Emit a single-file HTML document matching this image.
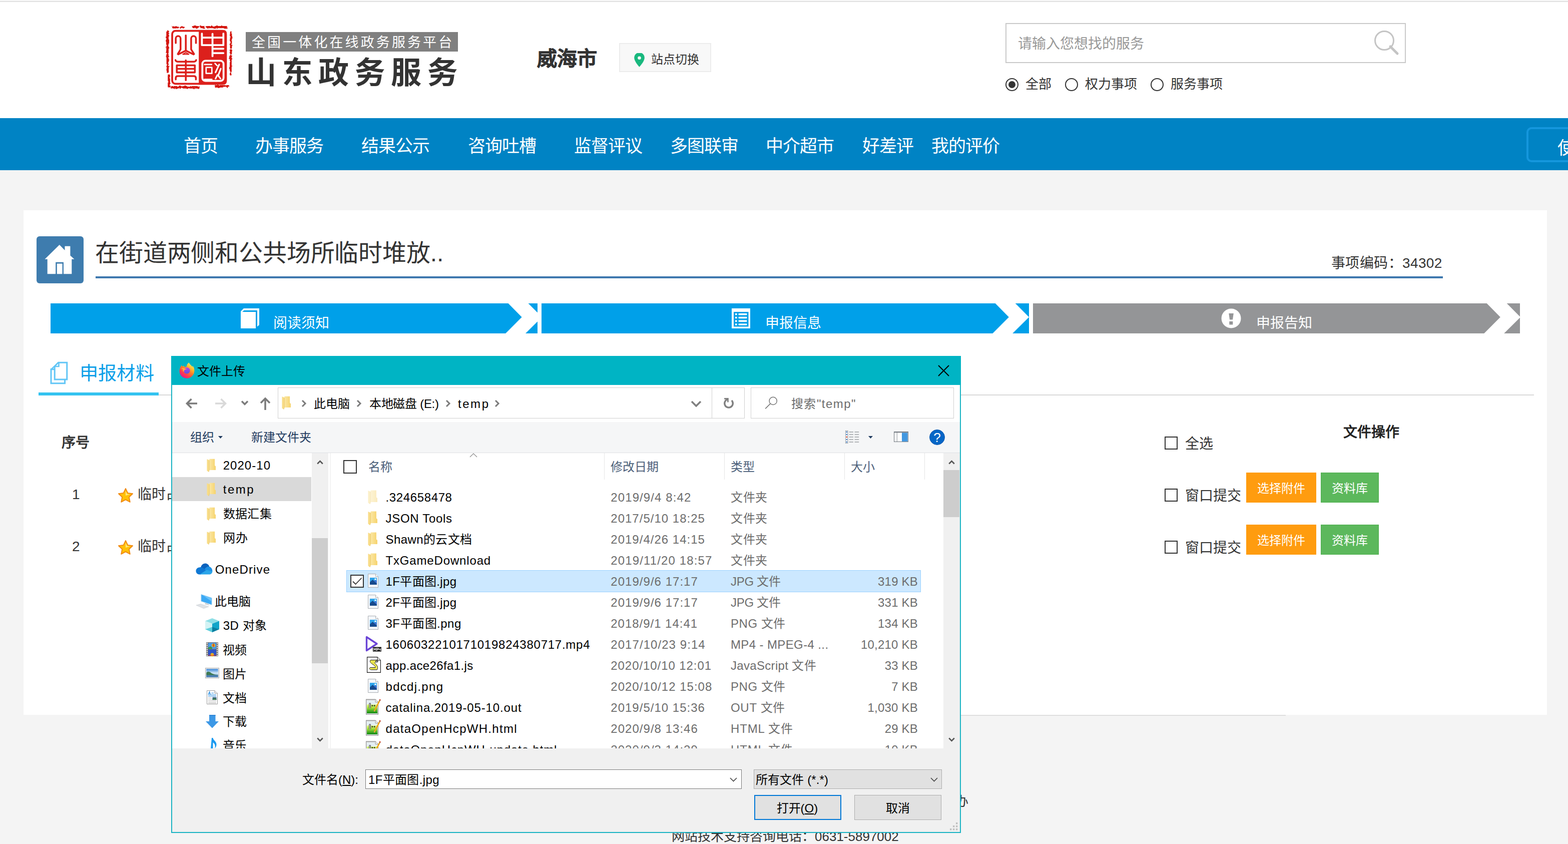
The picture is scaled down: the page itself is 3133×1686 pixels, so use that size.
<!DOCTYPE html>
<html lang="zh-CN"><head><meta charset="utf-8"><title>山东政务服务</title>
<style>
html,body{margin:0;padding:0;}
body{width:3133px;height:1686px;overflow:hidden;background:#f4f4f4;position:relative;
font-family:"Liberation Sans",sans-serif;}
.t{position:absolute;white-space:nowrap;margin:0;padding:0;}
.r{position:absolute;box-sizing:border-box;}
svg{position:absolute;overflow:visible;}
.t i{font-style:normal;display:inline-block;width:calc(1em + var(--ls,0px));letter-spacing:0;text-align:left;vertical-align:baseline;}
</style></head><body>

<div class="r" style="left:0px;top:0px;width:3133px;height:236px;background:#fff;"></div>
<div class="r" style="left:0px;top:0px;width:3133px;height:2px;background:#f9f9f9;"></div>
<div class="r" style="left:0px;top:2px;width:3133px;height:2px;background:#e0e0e0;"></div>
<svg style="left:325px;top:40px" width="150" height="145" viewBox="0 0 1434 1386">
<defs><filter id="rough" x="-5%" y="-5%" width="110%" height="110%"><feTurbulence type="fractalNoise" baseFrequency="0.02" numOctaves="2" seed="7" result="n"/><feDisplacementMap in="SourceGraphic" in2="n" scale="42"/></filter></defs>
<g filter="url(#rough)" fill="none" stroke="#d4120f" stroke-linecap="round">
<path d="M92 215 V700 M95 740 V1000 M120 1060 V1270" stroke-width="44" stroke-dasharray="250 40 120 30 300 50"/>
<path d="M200 140 H440 M590 135 H1220" stroke-width="40" stroke-dasharray="90 50 60 60 400 30 200 40"/>
<path d="M1305 230 V640 M1300 680 V1040" stroke-width="36" stroke-dasharray="300 40 150 60"/>
<path d="M170 1285 H740 M1010 1265 H1250" stroke-width="46" stroke-dasharray="180 40 300 60"/>
</g>
<rect x="182" y="207" width="1026" height="1011" rx="62" fill="#fff" stroke="#dc201c" stroke-width="36"/>
<path d="M690 190 H1163 a62 62 0 0 1 62 62 V1173 a62 62 0 0 1 -62 62 H690 Z" fill="#dc201c"/>
<g fill="none" stroke="#dc201c" stroke-width="34" stroke-linecap="round" stroke-linejoin="round">
<path d="M250 440 V352 a46 46 0 0 1 92 0 V560 L290 650"/>
<path d="M636 440 V352 a46 46 0 0 0 -92 0 V560 L600 650"/>
<path d="M442 295 V590"/>
<path d="M300 655 L442 585 L590 655"/>
<path d="M385 655 L442 622 L500 655 Z" stroke-width="20"/>
<path d="M245 765 q10 30 40 30 H600 q30 0 40 -30"/>
<path d="M442 770 V1150"/>
<path d="M270 865 H615 V1000 H270 Z M270 932 H615"/>
<path d="M250 1135 V1110 q0 -40 40 -40 H595 q40 0 40 40 V1135"/>
</g>
<g fill="none" stroke="#fff" stroke-width="36" stroke-linecap="round" stroke-linejoin="round">
<path d="M750 260 V480 H1160 V260 M750 335 H1160"/>
<path d="M952 265 V690"/>
<path d="M975 548 H1160 M975 632 H1160"/>
<rect x="758" y="778" width="405" height="385" rx="60"/>
<path d="M800 850 H935 M1000 830 L1040 870 M830 905 H940 V1020 H830 Z M800 1135 H940" stroke-width="26"/>
<path d="M1080 850 L1010 1000 M1110 930 L1060 1060 L1105 1120 M1010 1120 L1045 1050" stroke-width="30"/>
</g>
</svg>
<div class="r" style="left:491px;top:64px;width:424px;height:39px;background:#808080;"></div>
<svg style="left:0;top:0" width="940" height="200" viewBox="0 0 940 200" role="img" aria-label="全国一体化在线政务服务平台 山东政务服务"><title>全国一体化在线政务服务平台 山东政务服务</title>
<text x="503" y="93.5" font-size="27" fill="#fff" letter-spacing="4.1" style="font-family:'Liberation Sans','Noto Sans CJK SC',sans-serif;">全国一体化在线政务服务平台</text>
<text x="491" y="167" font-size="61" font-weight="bold" fill="#333" letter-spacing="11.5" style="font-family:'Liberation Sans','Noto Sans CJK SC',sans-serif;">山东政务服务</text></svg>
<div class="t" style="left:1073px;top:89.0px;height:56px;line-height:56px;font-size:40px;color:#333;font-weight:bold;-webkit-text-stroke:0.8px #333;"><i>威</i><i>海</i><i>市</i></div>
<div class="r" style="left:1237px;top:86px;width:184px;height:58px;background:#f8f8f8;border:2px solid #ececec;"></div>
<svg style="left:1266.5px;top:106px;overflow:hidden" width="21" height="28" viewBox="0 0 21 28">
<path d="M10.5 -1 C4.5 -1 0.2 3.6 0.2 9.6 C0.2 16.8 10.5 27.8 10.5 27.8 C10.5 27.8 20.8 16.8 20.8 9.6 C20.8 3.6 16.5 -1 10.5 -1 Z" fill="#19b87e"/>
<circle cx="10.5" cy="9.8" r="3.3" fill="#f8f8f8"/></svg>
<div class="t" style="left:1301px;top:101.5px;height:33px;line-height:33px;font-size:24px;color:#333;font-weight:normal;"><i>站</i><i>点</i><i>切</i><i>换</i></div>
<div class="r" style="left:2009px;top:46px;width:800px;height:80px;background:#fff;border:2px solid #c9c9c9;"></div>
<div class="t" style="left:2034px;top:67.5px;height:39px;line-height:39px;font-size:28px;color:#999;font-weight:normal;"><i>请</i><i>输</i><i>入</i><i>您</i><i>想</i><i>找</i><i>的</i><i>服</i><i>务</i></div>
<svg style="left:2745px;top:60px" width="50" height="50" viewBox="0 0 50 50">
<circle cx="21" cy="21" r="18.5" fill="none" stroke="#c4c4c4" stroke-width="3"/>
<path d="M33 33 L47 47" stroke="#c4c4c4" stroke-width="5" stroke-linecap="round"/></svg>
<svg style="left:2008px;top:155px" width="28" height="28" viewBox="0 0 28 28"><circle cx="14" cy="14" r="12" fill="#fff" stroke="#333" stroke-width="2"/><circle cx="14" cy="14" r="7" fill="#333"/></svg>
<div class="t" style="left:2049px;top:150.0px;height:36px;line-height:36px;font-size:26px;color:#333;font-weight:normal;"><i>全</i><i>部</i></div>
<svg style="left:2127px;top:155px" width="28" height="28" viewBox="0 0 28 28"><circle cx="14" cy="14" r="12" fill="#fff" stroke="#333" stroke-width="2"/></svg>
<div class="t" style="left:2168px;top:150.0px;height:36px;line-height:36px;font-size:26px;color:#333;font-weight:normal;"><i>权</i><i>力</i><i>事</i><i>项</i></div>
<svg style="left:2298px;top:155px" width="28" height="28" viewBox="0 0 28 28"><circle cx="14" cy="14" r="12" fill="#fff" stroke="#333" stroke-width="2"/></svg>
<div class="t" style="left:2339px;top:150.0px;height:36px;line-height:36px;font-size:26px;color:#333;font-weight:normal;"><i>服</i><i>务</i><i>事</i><i>项</i></div>
<div class="r" style="left:0px;top:236px;width:3133px;height:104px;background:#0083c4;"></div>
<div class="t" style="left:367px;top:267.0px;height:49px;line-height:49px;font-size:35px;color:#fff;font-weight:normal;letter-spacing:-1px;--ls:-1.00px;"><i>首</i><i>页</i></div>
<div class="t" style="left:510px;top:267.0px;height:49px;line-height:49px;font-size:35px;color:#fff;font-weight:normal;letter-spacing:-1px;--ls:-1.00px;"><i>办</i><i>事</i><i>服</i><i>务</i></div>
<div class="t" style="left:722px;top:267.0px;height:49px;line-height:49px;font-size:35px;color:#fff;font-weight:normal;letter-spacing:-1px;--ls:-1.00px;"><i>结</i><i>果</i><i>公</i><i>示</i></div>
<div class="t" style="left:935px;top:267.0px;height:49px;line-height:49px;font-size:35px;color:#fff;font-weight:normal;letter-spacing:-1px;--ls:-1.00px;"><i>咨</i><i>询</i><i>吐</i><i>槽</i></div>
<div class="t" style="left:1147px;top:267.0px;height:49px;line-height:49px;font-size:35px;color:#fff;font-weight:normal;letter-spacing:-1px;--ls:-1.00px;"><i>监</i><i>督</i><i>评</i><i>议</i></div>
<div class="t" style="left:1339px;top:267.0px;height:49px;line-height:49px;font-size:35px;color:#fff;font-weight:normal;letter-spacing:-1px;--ls:-1.00px;"><i>多</i><i>图</i><i>联</i><i>审</i></div>
<div class="t" style="left:1530px;top:267.0px;height:49px;line-height:49px;font-size:35px;color:#fff;font-weight:normal;letter-spacing:-1px;--ls:-1.00px;"><i>中</i><i>介</i><i>超</i><i>市</i></div>
<div class="t" style="left:1723px;top:267.0px;height:49px;line-height:49px;font-size:35px;color:#fff;font-weight:normal;letter-spacing:-1px;--ls:-1.00px;"><i>好</i><i>差</i><i>评</i></div>
<div class="t" style="left:1861px;top:267.0px;height:49px;line-height:49px;font-size:35px;color:#fff;font-weight:normal;letter-spacing:-1px;--ls:-1.00px;"><i>我</i><i>的</i><i>评</i><i>价</i></div>
<div class="r" style="left:3050px;top:254px;width:120px;height:70px;background:transparent;border:4px solid #1597dd;border-radius:10px;"></div>
<div class="t" style="left:3111.5px;top:270.5px;height:49px;line-height:49px;font-size:35px;color:#fff;font-weight:normal;"><i>使</i><i>用</i><i>帮</i><i>助</i></div>
<div class="r" style="left:47px;top:420px;width:3044px;height:1008px;background:#fff;"></div>
<div class="r" style="left:73px;top:472px;width:94px;height:94px;background:#3e7cae;border-radius:6px;"></div>
<svg style="left:73px;top:472px" width="94" height="94" viewBox="73 472 94 94">
<path d="M118.8 489 L129.5 500 V491.7 H140.4 V510.5 L148.5 517.8 H143.3 V547.3 H127 V523.8 H111.2 V547.3 H94.7 V517.8 H89.5 Z" fill="#fff"/>
<rect x="113.8" y="526.6" width="10.8" height="20.7" fill="#fff"/></svg>
<div class="t" style="left:190px;top:471.5px;height:67px;line-height:67px;font-size:48px;color:#333;font-weight:normal;letter-spacing:-0.15px;--ls:-0.15px;"><i>在</i><i>街</i><i>道</i><i>两</i><i>侧</i><i>和</i><i>公</i><i>共</i><i>场</i><i>所</i><i>临</i><i>时</i><i>堆</i><i>放</i>..</div>
<div class="r" style="left:191px;top:552px;width:2692px;height:4px;background:#3e78ae;"></div>
<div class="t" style="left:2660px;top:505.5px;height:39px;line-height:39px;font-size:28px;color:#333;font-weight:normal;letter-spacing:0.4px;--ls:0.40px;"><i>事</i><i>项</i><i>编</i><i>码</i><i>：</i>34302</div>
<svg style="left:101px;top:606px;overflow:hidden" width="973" height="60" viewBox="0 0 973 60"><polygon points="0,0 914.5,0 941.5999999999999,27.4 909.1999999999999,60 0,60" fill="#00a0e9"/><polygon points="954.5,0 1100,0 1100,60 949.0,60 981.8,27.4" fill="#00a0e9"/></svg><svg style="left:481px;top:616px" width="37" height="40" viewBox="0 0 37 40">
<path d="M0 6 L6 0 H37 V33 L33 36.5 V4 H6.5 L3 7 H30 V40 H0 Z" fill="#fff"/></svg><div class="t" style="left:546px;top:625.5px;height:39px;line-height:39px;font-size:28px;color:#fff;font-weight:normal;"><i>阅</i><i>读</i><i>须</i><i>知</i></div>
<svg style="left:1082px;top:606px;overflow:hidden" width="974" height="60" viewBox="0 0 974 60"><polygon points="0,0 906.7,0 933.8,27.4 901.4,60 0,60" fill="#00a0e9"/><polygon points="946.7,0 1100,0 1100,60 941.2,60 974,27.4" fill="#00a0e9"/></svg><svg style="left:1462px;top:616px" width="37" height="40" viewBox="0 0 37 40">
<path d="M0 0 H37 V40 H0 Z M4 7 V36.5 H33.5 V7 Z" fill="#fff" fill-rule="evenodd"/>
<g fill="#fff"><rect x="7" y="10" width="3.6" height="3.4"/><rect x="13.5" y="10" width="17" height="3.4" rx="1.2"/>
<rect x="7" y="16.8" width="3.6" height="3.4"/><rect x="13.5" y="16.8" width="17" height="3.4" rx="1.2"/>
<rect x="7" y="23.6" width="3.6" height="3.4"/><rect x="13.5" y="23.6" width="17" height="3.4" rx="1.2"/>
<rect x="7" y="30.4" width="3.6" height="3.4"/><rect x="13.5" y="30.4" width="17" height="3.4" rx="1.2"/></g></svg><div class="t" style="left:1529px;top:625.5px;height:39px;line-height:39px;font-size:28px;color:#fff;font-weight:normal;"><i>申</i><i>报</i><i>信</i><i>息</i></div>
<svg style="left:2064px;top:606px;overflow:hidden" width="973" height="60" viewBox="0 0 973 60"><polygon points="0,0 906.7,0 933.8,27.4 901.4,60 0,60" fill="#949597"/><polygon points="946.7,0 1100,0 1100,60 941.2,60 974,27.4" fill="#949597"/></svg><svg style="left:2440px;top:616px" width="40" height="40" viewBox="0 0 40 40">
<circle cx="20" cy="20" r="19.5" fill="#fff"/>
<path d="M15.3 10 H24.8 L23 22.5 H17 Z M16.3 26 H23.3 V32.5 H16.3 Z" fill="#949597"/></svg><div class="t" style="left:2510px;top:625.5px;height:39px;line-height:39px;font-size:28px;color:#fff;font-weight:normal;"><i>申</i><i>报</i><i>告</i><i>知</i></div>
<svg style="left:98px;top:720px" width="40" height="50" viewBox="98 720 40 50">
<g fill="none" stroke="#62c6f6" stroke-width="3">
<path d="M116.5 724.2 H133.8 V758 H109.2 V731.5 Z"/><path d="M109.2 732 H117.5 V724.2" stroke-width="2.6"/>
<path d="M108 737.8 H102 V765.8 H129.6 V759"/><path d="M101.5 738.5 L109 731.5" stroke-width="2.4"/></g></svg>
<div class="t" style="left:159px;top:720.0px;height:52px;line-height:52px;font-size:37.2px;color:#0c9fe8;font-weight:normal;"><i>申</i><i>报</i><i>材</i><i>料</i></div>
<div class="r" style="left:77px;top:788px;width:2988px;height:2px;background:#d9d9d9;"></div>
<div class="r" style="left:77px;top:784px;width:240px;height:6px;background:#33c3f0;"></div>
<div class="t" style="left:123px;top:864.5px;height:39px;line-height:39px;font-size:28px;color:#333;font-weight:bold;"><i>序</i><i>号</i></div>
<div class="t" style="left:144px;top:967.5px;height:39px;line-height:39px;font-size:28px;color:#333;font-weight:normal;">1</div>
<svg style="left:236px;top:975px" width="30" height="29" viewBox="0 0 32 31">
<path d="M16 1 L20.6 10.6 L31 12 L23.4 19.2 L25.4 29.8 L16 24.7 L6.6 29.8 L8.6 19.2 L1 12 L11.4 10.6 Z" fill="#ffc107" stroke="#f08a12" stroke-width="2" stroke-linejoin="round"/>
<path d="M16 5.5 L19 12.3 L25.5 13.3 L16 16 Z" fill="#ffe680"/></svg>
<div class="t" style="left:275px;top:967.5px;height:39px;line-height:39px;font-size:28px;color:#333;font-weight:normal;"><i>临</i><i>时</i><i>占</i><i>用</i><i>街</i><i>道</i><i>两</i><i>侧</i><i>和</i><i>公</i><i>共</i><i>场</i><i>所</i><i>审</i><i>批</i><i>申</i><i>请</i><i>表</i></div>
<div class="t" style="left:144px;top:1071.5px;height:39px;line-height:39px;font-size:28px;color:#333;font-weight:normal;">2</div>
<svg style="left:236px;top:1079px" width="30" height="29" viewBox="0 0 32 31">
<path d="M16 1 L20.6 10.6 L31 12 L23.4 19.2 L25.4 29.8 L16 24.7 L6.6 29.8 L8.6 19.2 L1 12 L11.4 10.6 Z" fill="#ffc107" stroke="#f08a12" stroke-width="2" stroke-linejoin="round"/>
<path d="M16 5.5 L19 12.3 L25.5 13.3 L16 16 Z" fill="#ffe680"/></svg>
<div class="t" style="left:275px;top:1071.5px;height:39px;line-height:39px;font-size:28px;color:#333;font-weight:normal;"><i>临</i><i>时</i><i>占</i><i>用</i><i>街</i><i>道</i><i>两</i><i>侧</i><i>和</i><i>公</i><i>共</i><i>场</i><i>所</i><i>审</i><i>批</i><i>申</i><i>请</i><i>表</i></div>
<div class="t" style="left:2684px;top:844.0px;height:39px;line-height:39px;font-size:28px;color:#222;font-weight:bold;"><i>文</i><i>件</i><i>操</i><i>作</i></div>
<div class="r" style="left:2327px;top:872px;width:26px;height:26px;background:#fff;border:2px solid #333;"></div>
<div class="t" style="left:2368px;top:866.5px;height:39px;line-height:39px;font-size:28px;color:#333;font-weight:normal;"><i>全</i><i>选</i></div>
<div class="r" style="left:2327px;top:976px;width:26px;height:26px;background:#fff;border:2px solid #333;"></div>
<div class="t" style="left:2368px;top:970.5px;height:39px;line-height:39px;font-size:28px;color:#333;font-weight:normal;"><i>窗</i><i>口</i><i>提</i><i>交</i></div>
<div class="r" style="left:2490px;top:944px;width:140px;height:60px;background:#ff9c0f;"></div>
<div class="t" style="left:2512px;top:958.5px;height:33px;line-height:33px;font-size:24px;color:#fff;font-weight:normal;"><i>选</i><i>择</i><i>附</i><i>件</i></div>
<div class="r" style="left:2639px;top:944px;width:116px;height:60px;background:#5cb85c;border:1px solid #4cae4c;"></div>
<div class="t" style="left:2661px;top:958.5px;height:33px;line-height:33px;font-size:24px;color:#fff;font-weight:normal;"><i>资</i><i>料</i><i>库</i></div>
<div class="r" style="left:2327px;top:1080px;width:26px;height:26px;background:#fff;border:2px solid #333;"></div>
<div class="t" style="left:2368px;top:1074.5px;height:39px;line-height:39px;font-size:28px;color:#333;font-weight:normal;"><i>窗</i><i>口</i><i>提</i><i>交</i></div>
<div class="r" style="left:2490px;top:1048px;width:140px;height:60px;background:#ff9c0f;"></div>
<div class="t" style="left:2512px;top:1062.5px;height:33px;line-height:33px;font-size:24px;color:#fff;font-weight:normal;"><i>选</i><i>择</i><i>附</i><i>件</i></div>
<div class="r" style="left:2639px;top:1048px;width:116px;height:60px;background:#5cb85c;border:1px solid #4cae4c;"></div>
<div class="t" style="left:2661px;top:1062.5px;height:33px;line-height:33px;font-size:24px;color:#fff;font-weight:normal;"><i>资</i><i>料</i><i>库</i></div>
<div class="r" style="left:1920px;top:1428px;width:649px;height:2px;background:#dedede;"></div>
<div class="t" style="left:1342px;top:1652.5px;height:36px;line-height:36px;font-size:26px;color:#333;font-weight:normal;letter-spacing:0px;"><i>网</i><i>站</i><i>技</i><i>术</i><i>支</i><i>持</i><i>咨</i><i>询</i><i>电</i><i>话</i><i>：</i>0631-5897002</div>
<div class="t" style="left:1909px;top:1583.0px;height:36px;line-height:36px;font-size:26px;color:#333;font-weight:normal;"><i>办</i></div>
<div class="r" style="left:342px;top:711px;width:1578px;height:953px;background:#fff;border:2px solid #1bb3c3;"></div>
<div class="r" style="left:342px;top:711px;width:1578px;height:58px;background:#00b4c4;"></div>
<svg width="0" height="0" style="left:0;top:0"><defs>
<linearGradient id="gf" x1="0" y1="0" x2="1" y2="0"><stop offset="0" stop-color="#fbe7a4"/><stop offset="1" stop-color="#f6d36d"/></linearGradient>
<linearGradient id="gg" x1="0" y1="0" x2="0" y2="1"><stop offset="0" stop-color="#e4f98a"/><stop offset="0.35" stop-color="#a9e13e"/><stop offset="1" stop-color="#08860f"/></linearGradient>
<linearGradient id="gi" x1="0" y1="0" x2="0" y2="1"><stop offset="0" stop-color="#2ea3e8"/><stop offset="1" stop-color="#2aa0e6"/></linearGradient>
<symbol id="fold" viewBox="0 0 20 28">
<path d="M5.5 0.5 H17 V14.5 L19 16 V24 H5.5 Z" fill="url(#gf)"/>
<path d="M0.5 1 L5.5 3.2 V24 L4.2 28 L0.5 25.5 Z" fill="#f8dc87"/>
<path d="M5.5 3.2 V24 L4.2 28" fill="none" stroke="#e0b84a" stroke-width="0.6"/></symbol>
<symbol id="img" viewBox="0 0 21 28">
<path d="M0.5 0.5 H15.5 L20.5 5.5 V27.5 H0.5 Z" fill="#f4f7fa" stroke="#a9adb2" stroke-width="1"/>
<path d="M15.5 0.5 V5.5 H20.5" fill="#fff" stroke="#a9adb2" stroke-width="1"/>
<rect x="4" y="8" width="14" height="14" fill="#2fa4ea"/>
<path d="M4 22 V17 L9.5 12 L18 19.5 V22 Z" fill="#174a8c"/>
<path d="M12 14.5 L15 12.5 L18 15 V19.5 Z" fill="#3d6fd0"/>
<rect x="13.5" y="9.5" width="3" height="3" fill="#fff"/></symbol>
<symbol id="npp" viewBox="0 0 30 32">
<path d="M0.7 1.2 H19 L24.5 6.5 V30.9 H0.7 Z" fill="#f4f8fa" stroke="#8c8c8c" stroke-width="1.2"/>
<path d="M19 1.2 V6.5 H24.5" fill="#fff" stroke="#8c8c8c" stroke-width="1"/>
<path d="M2.5 2.6 H17.5" stroke="#888" stroke-width="1" stroke-dasharray="0.8 0.9"/>
<path d="M2.2 4.8 H18 M2.2 6.6 H19 M2.2 8.4 H23 M2.2 10.2 H23" stroke="#cfe3ea" stroke-width="0.8"/>
<rect x="2" y="11.2" width="21.2" height="17.8" fill="url(#gg)"/>
<path d="M6.8 18.6 V9.9 a1.35 1.35 0 0 1 2.7 0 V18.6" fill="#d2d2d2" stroke="#111" stroke-width="0.8"/>
<path d="M11.3 13.7 H14.7 M13 12 V15.4 M15.6 13.7 H19 M17.3 12 V15.4" stroke="#111" stroke-width="0.95" fill="none"/>
<path d="M27.6 0.6 L29.9 1.9 L18.3 24.4 L16.2 25.8 L16.2 23.2 Z" fill="#f2a516"/>
<path d="M27.6 0.6 L29.9 1.9 L29 3.7 L26.7 2.4 Z" fill="#c7383c"/>
<path d="M26.7 2.4 L29 3.7 L28.4 4.9 L26.1 3.6 Z" fill="#8a8f98"/>
<path d="M16.2 25.8 L16.2 23.2 L18.3 24.4 Z" fill="#e8c9a0"/><path d="M16.2 25.8 L16.2 24.7 L17.1 25.2 Z" fill="#333"/></symbol>
</defs></svg>
<svg style="left:357.5px;top:723.5px" width="31" height="32" viewBox="0 0 31 32">
<defs><linearGradient id="ffb" x1="0.85" y1="0.08" x2="0.25" y2="0.95"><stop offset="0" stop-color="#fff36b"/><stop offset="0.25" stop-color="#ffc02f"/><stop offset="0.5" stop-color="#ff7f27"/><stop offset="0.75" stop-color="#ff3f4a"/><stop offset="1" stop-color="#e8168b"/></linearGradient>
<linearGradient id="ffgl" x1="0.5" y1="0" x2="0.5" y2="1"><stop offset="0" stop-color="#b93df5"/><stop offset="1" stop-color="#5b57d8"/></linearGradient></defs>
<path d="M19.5 0.3 C20.5 3.5 24 5.5 26.5 9 C27 8 26.8 7 26.5 6.2 C29.5 9 30.8 13.5 30.3 18 C29.5 26 23 31.7 15.3 31.7 C7 31.7 0.6 25.3 0.6 17.3 C0.6 12.5 2.5 8.5 5.3 5.6 C5.6 7 6.3 8 7.2 8.6 C7.6 7.6 8.3 6.8 9.3 6.2 C9.6 7.5 10.3 8.6 11.5 9.2 C12.5 8.6 13.8 8.3 15 8.4 C14.6 5.5 16.5 2.5 19.5 0.3 Z" fill="url(#ffb)"/>
<circle cx="15.3" cy="16.3" r="6.3" fill="url(#ffgl)"/>
<path d="M4 12.8 C6 11 9 10.8 11 12 C12.5 12.9 14 13 15.6 12.6 C14.5 14 12.5 14.6 11 14.6 C9.8 15.6 9.2 17 9.6 18.8 C7 17.5 6.8 14.8 8 13.4 C6.6 12.7 5.3 12.5 4 12.8 Z" fill="#ffb43a"/></svg>
<div class="t" style="left:394px;top:724.5px;height:33px;line-height:33px;font-size:24px;color:#000;font-weight:normal;"><i>文</i><i>件</i><i>上</i><i>传</i></div>
<svg style="left:1874px;top:729px" width="23" height="23" viewBox="0 0 23 23"><path d="M1 1 L22 22 M22 1 L1 22" stroke="#000" stroke-width="2" fill="none"/></svg>
<svg style="left:370px;top:793px" width="26" height="26" viewBox="0 0 26 26"><path d="M24 13 H4.5 M12.5 4 L3.5 13 L12.5 22" fill="none" stroke="#7b7b7b" stroke-width="3.6"/></svg>
<svg style="left:428px;top:793px" width="26" height="26" viewBox="0 0 26 26"><path d="M2 13 H21.5 M13.5 4 L22.5 13 L13.5 22" fill="none" stroke="#d9d9d9" stroke-width="3.6"/></svg>
<svg style="left:481px;top:799px" width="16" height="12" viewBox="0 0 16 12"><path d="M2 2.5 L8 8.5 L14 2.5" fill="none" stroke="#7b7b7b" stroke-width="3.4"/></svg>
<svg style="left:519px;top:792px" width="22" height="28" viewBox="0 0 22 28"><path d="M11 27 V4.5 M2 13 L11 4 L20 13" fill="none" stroke="#7b7b7b" stroke-width="3.6"/></svg>
<div class="r" style="left:555px;top:774px;width:933px;height:62px;background:#fff;border:1px solid #d0d0d0;"></div>
<div class="r" style="left:1422px;top:775px;width:1px;height:60px;background:#d0d0d0;"></div>
<svg style="left:563px;top:791px" width="19" height="27"><use href="#fold" width="19" height="27"/></svg>
<svg style="left:602px;top:798px" width="11" height="16" viewBox="0 0 11 16"><path d="M2 2 L8 8 L2 14" fill="none" stroke="#7b7b7b" stroke-width="3"/></svg>
<div class="t" style="left:627px;top:789.5px;height:33px;line-height:33px;font-size:24px;color:#000;font-weight:normal;"><i>此</i><i>电</i><i>脑</i></div>
<svg style="left:712px;top:798px" width="11" height="16" viewBox="0 0 11 16"><path d="M2 2 L8 8 L2 14" fill="none" stroke="#7b7b7b" stroke-width="3"/></svg>
<div class="t" style="left:738px;top:789.5px;height:33px;line-height:33px;font-size:24px;color:#000;font-weight:normal;letter-spacing:-0.29px;--ls:-0.29px;"><i>本</i><i>地</i><i>磁</i><i>盘</i> (E:)</div>
<svg style="left:890px;top:798px" width="11" height="16" viewBox="0 0 11 16"><path d="M2 2 L8 8 L2 14" fill="none" stroke="#7b7b7b" stroke-width="3"/></svg>
<div class="t" style="left:915px;top:789.5px;height:33px;line-height:33px;font-size:24px;color:#000;font-weight:normal;letter-spacing:2.55px;--ls:2.55px;">temp</div>
<svg style="left:988px;top:798px" width="11" height="16" viewBox="0 0 11 16"><path d="M2 2 L8 8 L2 14" fill="none" stroke="#7b7b7b" stroke-width="3"/></svg>
<svg style="left:1380px;top:800px" width="22" height="14" viewBox="0 0 22 14"><path d="M2 2 L11 11 L20 2" fill="none" stroke="#808080" stroke-width="3.6"/></svg>
<svg style="left:1440px;top:790px" width="32" height="32" viewBox="0 0 32 32"><path d="M21.9 9.9 A8.3 8.3 0 1 1 14.6 7.6" fill="none" stroke="#808080" stroke-width="3.4"/><path d="M7.1 6.4 H14.45 V13.6" fill="none" stroke="#808080" stroke-width="2.7"/></svg>
<div class="r" style="left:1500px;top:774px;width:406px;height:62px;background:#fff;border:1px solid #d0d0d0;"></div>
<svg style="left:1528px;top:792px" width="26" height="26" viewBox="0 0 26 26"><circle cx="16.7" cy="8.9" r="7.6" fill="none" stroke="#777" stroke-width="1.5"/><path d="M11.2 14.4 L1.2 24.4" stroke="#777" stroke-width="1.6"/></svg>
<div class="t" style="left:1581px;top:789.5px;height:33px;line-height:33px;font-size:24px;color:#6d6d6d;font-weight:normal;letter-spacing:1.44px;--ls:1.44px;"><i>搜</i><i>索</i>"temp"</div>
<div class="r" style="left:344px;top:843px;width:1574px;height:62px;background:#f5f6f7;border-bottom:1px solid #dfe1e4;"></div>
<div class="t" style="left:380px;top:856.5px;height:33px;line-height:33px;font-size:24px;color:#1f3b5f;font-weight:normal;"><i>组</i><i>织</i></div>
<svg style="left:436px;top:871px" width="9" height="5" viewBox="0 0 9 5"><path d="M0 0 H9 L4.5 5 Z" fill="#1f3b5f"/></svg>
<div class="t" style="left:502px;top:856.5px;height:33px;line-height:33px;font-size:24px;color:#1f3b5f;font-weight:normal;"><i>新</i><i>建</i><i>文</i><i>件</i><i>夹</i></div>
<svg style="left:1689px;top:860px" width="28" height="26" viewBox="0 0 28 26"><rect x="0.5" y="0.5" width="4.5" height="25" fill="#fff" stroke="#8a8f96" stroke-width="0.8"/><rect x="1.6" y="1.8" width="2.4" height="2.4" fill="#3a78c2"/><rect x="7.6" y="2.5" width="8.4" height="1" fill="#70757b"/><rect x="18.6" y="2.5" width="8.6" height="1" fill="#70757b"/><rect x="1.6" y="6.8" width="2.4" height="2.4" fill="#3a78c2"/><rect x="7.6" y="7.5" width="8.4" height="1" fill="#70757b"/><rect x="18.6" y="7.5" width="8.6" height="1" fill="#70757b"/><rect x="1.6" y="11.8" width="2.4" height="2.4" fill="#d2452f"/><rect x="7.6" y="12.5" width="8.4" height="1" fill="#70757b"/><rect x="18.6" y="12.5" width="8.6" height="1" fill="#70757b"/><rect x="1.6" y="16.8" width="2.4" height="2.4" fill="#3a78c2"/><rect x="7.6" y="17.5" width="8.4" height="1" fill="#70757b"/><rect x="18.6" y="17.5" width="8.6" height="1" fill="#70757b"/><rect x="1.6" y="21.8" width="2.4" height="2.4" fill="#3a78c2"/><rect x="7.6" y="22.5" width="8.4" height="1" fill="#70757b"/><rect x="18.6" y="22.5" width="8.6" height="1" fill="#70757b"/></svg>
<svg style="left:1735px;top:871px" width="9" height="5" viewBox="0 0 9 5"><path d="M0 0 H9 L4.5 5 Z" fill="#1f3b5f"/></svg>
<svg style="left:1786px;top:862px" width="29" height="21" viewBox="0 0 29 21"><rect x="0.6" y="0.6" width="27.8" height="19.8" fill="#fff" stroke="#7f858c" stroke-width="1.2"/><rect x="16" y="2.3" width="11.6" height="17.6" fill="#4398e0"/><path d="M6.3 1 V20" stroke="#8a9097" stroke-width="1"/><path d="M0.6 1.4 H28.4" stroke="#7a7f86" stroke-width="1.8"/></svg>
<svg style="left:1857px;top:858px" width="31" height="31" viewBox="0 0 31 31"><circle cx="15.5" cy="15.5" r="15" fill="#0566c6" stroke="#0a57b0" stroke-width="1"/></svg>
<div class="t" style="left:1865.3px;top:856.0px;height:36px;line-height:36px;font-size:26px;color:#fff;font-weight:normal;">?</div>
<div class="r" style="left:344px;top:953px;width:278px;height:48px;background:#d9d9d9;"></div>
<svg style="left:413px;top:916px" width="19" height="27"><use href="#fold" width="19" height="27"/></svg>
<div class="t" style="left:445.7px;top:912.5px;height:33px;line-height:33px;font-size:24px;color:#000;font-weight:normal;letter-spacing:1.04px;--ls:1.04px;">2020-10</div>
<svg style="left:413px;top:964px" width="19" height="27"><use href="#fold" width="19" height="27"/></svg>
<div class="t" style="left:445.7px;top:960.5px;height:33px;line-height:33px;font-size:24px;color:#000;font-weight:normal;letter-spacing:2.55px;--ls:2.55px;">temp</div>
<svg style="left:413px;top:1013px" width="19" height="27"><use href="#fold" width="19" height="27"/></svg>
<div class="t" style="left:445.7px;top:1009.5px;height:33px;line-height:33px;font-size:24px;color:#000;font-weight:normal;letter-spacing:0.33px;--ls:0.33px;"><i>数</i><i>据</i><i>汇</i><i>集</i></div>
<svg style="left:413px;top:1061px" width="19" height="27"><use href="#fold" width="19" height="27"/></svg>
<div class="t" style="left:445.7px;top:1057.5px;height:33px;line-height:33px;font-size:24px;color:#000;font-weight:normal;letter-spacing:1.00px;--ls:1.00px;"><i>网</i><i>办</i></div>
<svg style="left:391px;top:1125px" width="34" height="23" viewBox="0 0 34 23">
<path d="M10 9 C11 4 14.5 0.5 19 0.5 C23 0.5 26 3 27.2 6.5 L18 14 L9 10.5 Z" fill="#0b62bd"/>
<path d="M7 8.5 C9 7.5 11.5 7.8 13.5 9 L22 14 L10 22.5 H7 C3.5 22.5 0.5 19.5 0.5 15.5 C0.5 12 3 9 7 8.5 Z" fill="#0f78d4"/>
<path d="M18 11.5 C21 7 26 5.5 29.5 8 C32.5 10 33.8 13.5 33.3 17 L22 18 Z" fill="#1c8fe3"/>
<path d="M33.3 16.5 C33.3 20 30.5 22.5 27.5 22.5 H8 L22 13.5 Z" fill="#2ba5e9"/></svg>
<div class="t" style="left:429.8px;top:1120.5px;height:33px;line-height:33px;font-size:24px;color:#000;font-weight:normal;letter-spacing:1.12px;--ls:1.12px;">OneDrive</div>
<svg style="left:392px;top:1187px" width="32" height="29" viewBox="0 0 32 29">
<path d="M10 0.5 L31 7.5 V21 L10 14 Z" fill="#3ba9f4" stroke="#8fc9f0" stroke-width="1"/>
<path d="M14 2.5 L30 8 V14 Z" fill="#6cc4fb"/>
<path d="M18 17.5 L24 19.5 L27 22.5 L17 20 Z" fill="#c9cdd2"/>
<path d="M0 22 L9 19.5 L25 25 L15 28.5 Z" fill="#dfe2e6" stroke="#c5c9ce" stroke-width="0.6"/></svg>
<div class="t" style="left:429px;top:1184.5px;height:33px;line-height:33px;font-size:24px;color:#000;font-weight:normal;"><i>此</i><i>电</i><i>脑</i></div>
<svg style="left:410px;top:1235px" width="28" height="28" viewBox="0 0 28 28">
<path d="M14 0 L28 5.5 L14 11 L0 5.5 Z" fill="#8fdfe6"/>
<path d="M0 5.5 L14 11 V28 L0 22 Z" fill="#d3f3f4"/>
<path d="M14 11 L28 5.5 V22 L14 28 Z" fill="#12a5c9"/>
<path d="M0 22 L14 17.5 L14 28 Z" fill="#5fcfdc"/>
<path d="M14 17.5 L28 22 L14 28 Z" fill="#0b7ea0"/></svg>
<div class="t" style="left:445.7px;top:1232.5px;height:33px;line-height:33px;font-size:24px;color:#000;font-weight:normal;letter-spacing:0.49px;--ls:0.49px;">3D <i>对</i><i>象</i></div>
<svg style="left:412px;top:1283px" width="24" height="28" viewBox="0 0 24 28"><rect width="24" height="28" fill="#6e6e6e"/><rect x="4" y="1" width="16" height="12.5" fill="#4b9be8"/><rect x="4" y="14.5" width="16" height="12.5" fill="#2f55c9"/><circle cx="14.5" cy="6" r="3.6" fill="#e8b21d"/><path d="M12.6 6 h3.8 M14.5 2.6 v7" stroke="#c32a2a" stroke-width="1.2"/><path d="M4 11 l4-3 4 2.5 v3 h-8z" fill="#3a9a4a"/><circle cx="12" cy="25" r="3.4" fill="#e8b21d"/><path d="M4 26 h16" stroke="#e34" stroke-width="1"/><rect x="0.8" y="1" width="2.2" height="2.2" fill="#f0f0f0"/><rect x="21" y="1" width="2.2" height="2.2" fill="#f0f0f0"/><rect x="0.8" y="5" width="2.2" height="2.2" fill="#f0f0f0"/><rect x="21" y="5" width="2.2" height="2.2" fill="#f0f0f0"/><rect x="0.8" y="9" width="2.2" height="2.2" fill="#f0f0f0"/><rect x="21" y="9" width="2.2" height="2.2" fill="#f0f0f0"/><rect x="0.8" y="13" width="2.2" height="2.2" fill="#f0f0f0"/><rect x="21" y="13" width="2.2" height="2.2" fill="#f0f0f0"/><rect x="0.8" y="17" width="2.2" height="2.2" fill="#f0f0f0"/><rect x="21" y="17" width="2.2" height="2.2" fill="#f0f0f0"/><rect x="0.8" y="21" width="2.2" height="2.2" fill="#f0f0f0"/><rect x="21" y="21" width="2.2" height="2.2" fill="#f0f0f0"/><rect x="0.8" y="25" width="2.2" height="2.2" fill="#f0f0f0"/><rect x="21" y="25" width="2.2" height="2.2" fill="#f0f0f0"/></svg>
<div class="t" style="left:445px;top:1281.5px;height:33px;line-height:33px;font-size:24px;color:#000;font-weight:normal;"><i>视</i><i>频</i></div>
<svg style="left:410px;top:1334px" width="28" height="21" viewBox="0 0 28 21">
<defs><linearGradient id="sky" x1="0" y1="0" x2="0" y2="1"><stop offset="0" stop-color="#3c86d6"/><stop offset="0.5" stop-color="#cfe6f7"/><stop offset="1" stop-color="#5a8dbb"/></linearGradient></defs>
<rect x="0.5" y="0.5" width="27" height="20" fill="#f7f7f7" stroke="#a9a9a9" stroke-width="1"/>
<rect x="2.2" y="2.2" width="23.6" height="16.6" fill="url(#sky)"/>
<path d="M2.2 14 V9.5 C6 6.5 9 8 12 10.5 C16 13 20 14 25.8 14.3 V15 H2.2 Z" fill="#3f7a52"/>
<rect x="2.2" y="14.6" width="23.6" height="4.2" fill="#4d7fb2"/></svg>
<div class="t" style="left:445px;top:1329.5px;height:33px;line-height:33px;font-size:24px;color:#000;font-weight:normal;"><i>图</i><i>片</i></div>
<svg style="left:413px;top:1379px" width="22" height="28" viewBox="0 0 22 28">
<path d="M0.5 0.5 H16 L21.5 6 V27.5 H0.5 Z" fill="#fff" stroke="#9c9c9c" stroke-width="1"/>
<path d="M16 0.5 V6 H21.5" fill="#eee" stroke="#9c9c9c" stroke-width="1"/>
<path d="M3.2 8.2 L5.6 2.6 L7.4 8.2 M4 6.3 H6.8" stroke="#2a8ee0" stroke-width="1.2" fill="none"/>
<path d="M9.5 5.5 H14 M3 8.8 H19 M3 11.5 H19" stroke="#2a8ee0" stroke-width="1"/>
<path d="M3 14.5 H10 M3 17.5 H10 M3 20.5 H19 M3 23.3 H19 M3 25.6 H19" stroke="#b5b5b5" stroke-width="0.9"/>
<rect x="11.5" y="13.5" width="8" height="5.6" fill="#46709a"/><path d="M11.5 17.5 L15 14.8 L19.5 17.2 V19.1 H11.5Z" fill="#3f7a52"/></svg>
<div class="t" style="left:445px;top:1377.5px;height:33px;line-height:33px;font-size:24px;color:#000;font-weight:normal;"><i>文</i><i>档</i></div>
<svg style="left:411px;top:1428px" width="26" height="27" viewBox="0 0 26 27"><path d="M7 0 H19.5 V13 H26 L13 26.5 L0 13 H7 Z" fill="#3c98e6"/><path d="M7 0 H19.5 V2 H7Z" fill="#2f86d6"/></svg>
<div class="t" style="left:445px;top:1424.5px;height:33px;line-height:33px;font-size:24px;color:#000;font-weight:normal;"><i>下</i><i>载</i></div>
<div class="r" style="left:344px;top:1470px;width:279px;height:25px;overflow:hidden;"><svg style="left:76px;top:4px" width="14" height="30" viewBox="0 0 14 30"><path d="M3 0 H5.5 C6 5 13 7 12.5 14 C12.3 17 11 19 9 21 C10.5 17 10 12 5.5 9 V24 C5.5 27 3 28.5 0.5 28 Z" fill="#1a9af0"/></svg><div class="t" style="left:101px;top:2.5px;height:33px;line-height:33px;font-size:24px;color:#000;font-weight:normal;"><i>音</i><i>乐</i></div></div>
<div class="r" style="left:623px;top:905px;width:33px;height:590px;background:#f0f0f0;"></div>
<div class="r" style="left:623px;top:1075px;width:32px;height:250px;background:#cdcdcd;"></div>
<svg style="left:633px;top:918px" width="13" height="10" viewBox="0 0 13 10"><path d="M1.2 8.5 L6.5 3 L11.8 8.5" fill="none" stroke="#555" stroke-width="2.6"/></svg>
<svg style="left:633px;top:1473px" width="13" height="10" viewBox="0 0 13 10"><path d="M1.2 1.5 L6.5 7 L11.8 1.5" fill="none" stroke="#555" stroke-width="2.6"/></svg>
<div class="r" style="left:659px;top:905px;width:2px;height:590px;background:#f3f3f3;"></div>
<div class="r" style="left:686px;top:919px;width:27px;height:27px;background:#fff;border:2px solid #333;"></div>
<div class="t" style="left:736px;top:915.5px;height:33px;line-height:33px;font-size:24px;color:#4c607a;font-weight:normal;"><i>名</i><i>称</i></div>
<svg style="left:938px;top:905px" width="16" height="9" viewBox="0 0 16 9"><path d="M1 8 L8 1 L15 8" fill="none" stroke="#8a8a8a" stroke-width="1.2"/></svg>
<div class="r" style="left:1207px;top:905px;width:1px;height:53px;background:#e5e5e5;"></div>
<div class="r" style="left:1447px;top:905px;width:1px;height:53px;background:#e5e5e5;"></div>
<div class="r" style="left:1687px;top:905px;width:1px;height:53px;background:#e5e5e5;"></div>
<div class="r" style="left:1847px;top:905px;width:1px;height:53px;background:#e5e5e5;"></div>
<div class="t" style="left:1220px;top:915.5px;height:33px;line-height:33px;font-size:24px;color:#4c607a;font-weight:normal;"><i>修</i><i>改</i><i>日</i><i>期</i></div>
<div class="t" style="left:1460px;top:915.5px;height:33px;line-height:33px;font-size:24px;color:#4c607a;font-weight:normal;"><i>类</i><i>型</i></div>
<div class="t" style="left:1700px;top:915.5px;height:33px;line-height:33px;font-size:24px;color:#4c607a;font-weight:normal;"><i>大</i><i>小</i></div>
<div class="r" style="left:692px;top:1139px;width:1148px;height:44px;background:#cce8ff;border:1px solid #99d1ff;"></div>
<div class="r" style="left:700px;top:1148px;width:27px;height:26px;background:#fff;border:2px solid #333;"></div>
<svg style="left:700px;top:1148px" width="27" height="26" viewBox="0 0 27 26"><path d="M5 13.5 L10.5 19 L22.5 6.5" fill="none" stroke="#333" stroke-width="1.8"/></svg>
<div class="r" style="left:661px;top:905px;width:1224px;height:590px;overflow:hidden;"><svg style="left:74px;top:74px; opacity:0.45;" width="20" height="28"><use href="#fold" width="20" height="28"/></svg><div class="t" style="left:109.5px;top:72.1px;height:33px;line-height:33px;font-size:24px;color:#000;font-weight:normal;letter-spacing:0.63px;--ls:0.63px;">.324658478</div><div class="t" style="left:559.3px;top:72.1px;height:33px;line-height:33px;font-size:24px;color:#6d6d6d;font-weight:normal;letter-spacing:1.10px;--ls:1.10px;">2019/9/4 8:42</div><div class="t" style="left:799px;top:72.1px;height:33px;line-height:33px;font-size:24px;color:#6d6d6d;font-weight:normal;letter-spacing:0.70px;--ls:0.70px;"><i>文</i><i>件</i><i>夹</i></div><svg style="left:74px;top:116px;" width="20" height="28"><use href="#fold" width="20" height="28"/></svg><div class="t" style="left:109.5px;top:114.1px;height:33px;line-height:33px;font-size:24px;color:#000;font-weight:normal;letter-spacing:0.69px;--ls:0.69px;">JSON Tools</div><div class="t" style="left:559.3px;top:114.1px;height:33px;line-height:33px;font-size:24px;color:#6d6d6d;font-weight:normal;letter-spacing:1.01px;--ls:1.01px;">2017/5/10 18:25</div><div class="t" style="left:799px;top:114.1px;height:33px;line-height:33px;font-size:24px;color:#6d6d6d;font-weight:normal;letter-spacing:0.70px;--ls:0.70px;"><i>文</i><i>件</i><i>夹</i></div><svg style="left:74px;top:158px;" width="20" height="28"><use href="#fold" width="20" height="28"/></svg><div class="t" style="left:109.5px;top:156.1px;height:33px;line-height:33px;font-size:24px;color:#000;font-weight:normal;letter-spacing:0.43px;--ls:0.43px;">Shawn<i>的</i><i>云</i><i>文</i><i>档</i></div><div class="t" style="left:559.3px;top:156.1px;height:33px;line-height:33px;font-size:24px;color:#6d6d6d;font-weight:normal;letter-spacing:1.01px;--ls:1.01px;">2019/4/26 14:15</div><div class="t" style="left:799px;top:156.1px;height:33px;line-height:33px;font-size:24px;color:#6d6d6d;font-weight:normal;letter-spacing:0.70px;--ls:0.70px;"><i>文</i><i>件</i><i>夹</i></div><svg style="left:74px;top:200px;" width="20" height="28"><use href="#fold" width="20" height="28"/></svg><div class="t" style="left:109.5px;top:198.1px;height:33px;line-height:33px;font-size:24px;color:#000;font-weight:normal;letter-spacing:0.84px;--ls:0.84px;">TxGameDownload</div><div class="t" style="left:559.3px;top:198.1px;height:33px;line-height:33px;font-size:24px;color:#6d6d6d;font-weight:normal;letter-spacing:1.13px;--ls:1.13px;">2019/11/20 18:57</div><div class="t" style="left:799px;top:198.1px;height:33px;line-height:33px;font-size:24px;color:#6d6d6d;font-weight:normal;letter-spacing:0.70px;--ls:0.70px;"><i>文</i><i>件</i><i>夹</i></div><svg style="left:74px;top:241px" width="21" height="28"><use href="#img" width="21" height="28"/></svg><div class="t" style="left:109.5px;top:240.1px;height:33px;line-height:33px;font-size:24px;color:#000;font-weight:normal;letter-spacing:0.37px;--ls:0.37px;">1F<i>平</i><i>面</i><i>图</i>.jpg</div><div class="t" style="left:559.3px;top:240.1px;height:33px;line-height:33px;font-size:24px;color:#6d6d6d;font-weight:normal;letter-spacing:1.03px;--ls:1.03px;">2019/9/6 17:17</div><div class="t" style="left:799px;top:240.1px;height:33px;line-height:33px;font-size:24px;color:#6d6d6d;font-weight:normal;letter-spacing:-0.31px;--ls:-0.31px;">JPG <i>文</i><i>件</i></div><div class="t" style="left:1093.1000000000001px;top:240.1px;height:33px;line-height:33px;font-size:24px;color:#6d6d6d;font-weight:normal;letter-spacing:0.17px;--ls:0.17px;">319 KB</div><svg style="left:74px;top:283px" width="21" height="28"><use href="#img" width="21" height="28"/></svg><div class="t" style="left:109.5px;top:282.1px;height:33px;line-height:33px;font-size:24px;color:#000;font-weight:normal;letter-spacing:0.37px;--ls:0.37px;">2F<i>平</i><i>面</i><i>图</i>.jpg</div><div class="t" style="left:559.3px;top:282.1px;height:33px;line-height:33px;font-size:24px;color:#6d6d6d;font-weight:normal;letter-spacing:1.03px;--ls:1.03px;">2019/9/6 17:17</div><div class="t" style="left:799px;top:282.1px;height:33px;line-height:33px;font-size:24px;color:#6d6d6d;font-weight:normal;letter-spacing:-0.31px;--ls:-0.31px;">JPG <i>文</i><i>件</i></div><div class="t" style="left:1093.1000000000001px;top:282.1px;height:33px;line-height:33px;font-size:24px;color:#6d6d6d;font-weight:normal;letter-spacing:0.17px;--ls:0.17px;">331 KB</div><svg style="left:74px;top:325px" width="21" height="28"><use href="#img" width="21" height="28"/></svg><div class="t" style="left:109.5px;top:324.1px;height:33px;line-height:33px;font-size:24px;color:#000;font-weight:normal;letter-spacing:0.50px;--ls:0.50px;">3F<i>平</i><i>面</i><i>图</i>.png</div><div class="t" style="left:559.3px;top:324.1px;height:33px;line-height:33px;font-size:24px;color:#6d6d6d;font-weight:normal;letter-spacing:0.97px;--ls:0.97px;">2018/9/1 14:41</div><div class="t" style="left:799px;top:324.1px;height:33px;line-height:33px;font-size:24px;color:#6d6d6d;font-weight:normal;letter-spacing:0.56px;--ls:0.56px;">PNG <i>文</i><i>件</i></div><div class="t" style="left:1093.1000000000001px;top:324.1px;height:33px;line-height:33px;font-size:24px;color:#6d6d6d;font-weight:normal;letter-spacing:0.17px;--ls:0.17px;">134 KB</div><svg style="left:68px;top:364px" width="34" height="34" viewBox="0 0 34 34"><path d="M3.5 3.5 L24 17 L3.5 30.5 Z" fill="#fff" stroke="#6a44d6" stroke-width="3.4" stroke-linejoin="round"/><rect x="16" y="23.5" width="17" height="9" fill="#111"/><path d="M18 31 V26 L20 28.5 L22 26 V31 M24 31 V26 H26.6 V28.6 H24 M28.5 26 V28.8 H31.5 M31.5 26 V31" fill="none" stroke="#fff" stroke-width="1.1"/></svg><div class="t" style="left:109.5px;top:366.1px;height:33px;line-height:33px;font-size:24px;color:#000;font-weight:normal;letter-spacing:0.75px;--ls:0.75px;">1606032210171019824380717.mp4</div><div class="t" style="left:559.3px;top:366.1px;height:33px;line-height:33px;font-size:24px;color:#6d6d6d;font-weight:normal;letter-spacing:1.06px;--ls:1.06px;">2017/10/23 9:14</div><div class="t" style="left:799px;top:366.1px;height:33px;line-height:33px;font-size:24px;color:#6d6d6d;font-weight:normal;letter-spacing:0.38px;--ls:0.38px;">MP4 - MPEG-4 ...</div><div class="t" style="left:1058.9px;top:366.1px;height:33px;line-height:33px;font-size:24px;color:#6d6d6d;font-weight:normal;letter-spacing:0.21px;--ls:0.21px;">10,210 KB</div><svg style="left:72px;top:407px" width="28" height="32" viewBox="0 0 28 32"><path d="M0.6 0.6 H21 L27.4 7 V31.4 H0.6 Z" fill="#fff" stroke="#111" stroke-width="1.1"/><path d="M21 0.6 V7 H27.4" fill="#e8e8e8" stroke="#111" stroke-width="1"/><path d="M7.5 6.5 H19 C21.5 6.5 22.5 8.5 21.5 10.5 H17.5 C15.5 10.5 15.5 12.5 17.5 14.5 C21.5 18 22.5 21.5 20.5 26 H8.5 C5.5 26 4.5 23 6.5 21.5 H17 C17.5 19.5 15.5 17.5 12.5 15.5 C8.5 13 4.5 10.5 7.5 6.5 Z" fill="#f5f06a" stroke="#111" stroke-width="1"/><path d="M17.8 10.5 C16.8 8.6 17.8 7.2 19.8 7.2 C22 7.6 22.4 9.6 21.2 10.5 Z" fill="#a8a8a8" stroke="#111" stroke-width="0.9"/><path d="M8.6 9 H16 M8.8 11.5 H14.5 M11.5 14 H15.5 M14.5 17 H18.5 M16 19.5 H19.3 M8.5 23.8 H18.5" stroke="#c9c40a" stroke-width="0.8"/></svg><div class="t" style="left:109.5px;top:408.1px;height:33px;line-height:33px;font-size:24px;color:#000;font-weight:normal;letter-spacing:0.37px;--ls:0.37px;">app.ace26fa1.js</div><div class="t" style="left:559.3px;top:408.1px;height:33px;line-height:33px;font-size:24px;color:#6d6d6d;font-weight:normal;letter-spacing:0.93px;--ls:0.93px;">2020/10/10 12:01</div><div class="t" style="left:799px;top:408.1px;height:33px;line-height:33px;font-size:24px;color:#6d6d6d;font-weight:normal;letter-spacing:0.32px;--ls:0.32px;">JavaScript <i>文</i><i>件</i></div><div class="t" style="left:1106.7px;top:408.1px;height:33px;line-height:33px;font-size:24px;color:#6d6d6d;font-weight:normal;letter-spacing:0.15px;--ls:0.15px;">33 KB</div><svg style="left:74px;top:451px" width="21" height="28"><use href="#img" width="21" height="28"/></svg><div class="t" style="left:109.5px;top:450.1px;height:33px;line-height:33px;font-size:24px;color:#000;font-weight:normal;letter-spacing:1.30px;--ls:1.30px;">bdcdj.png</div><div class="t" style="left:559.3px;top:450.1px;height:33px;line-height:33px;font-size:24px;color:#6d6d6d;font-weight:normal;letter-spacing:1.01px;--ls:1.01px;">2020/10/12 15:08</div><div class="t" style="left:799px;top:450.1px;height:33px;line-height:33px;font-size:24px;color:#6d6d6d;font-weight:normal;letter-spacing:0.56px;--ls:0.56px;">PNG <i>文</i><i>件</i></div><div class="t" style="left:1120.2px;top:450.1px;height:33px;line-height:33px;font-size:24px;color:#6d6d6d;font-weight:normal;letter-spacing:0.16px;--ls:0.16px;">7 KB</div><svg style="left:70px;top:491px" width="30" height="32"><use href="#npp" width="30" height="32"/></svg><div class="t" style="left:109.5px;top:492.1px;height:33px;line-height:33px;font-size:24px;color:#000;font-weight:normal;letter-spacing:0.86px;--ls:0.86px;">catalina.2019-05-10.out</div><div class="t" style="left:559.3px;top:492.1px;height:33px;line-height:33px;font-size:24px;color:#6d6d6d;font-weight:normal;letter-spacing:1.01px;--ls:1.01px;">2019/5/10 15:36</div><div class="t" style="left:799px;top:492.1px;height:33px;line-height:33px;font-size:24px;color:#6d6d6d;font-weight:normal;letter-spacing:0.70px;--ls:0.70px;">OUT <i>文</i><i>件</i></div><div class="t" style="left:1072.5px;top:492.1px;height:33px;line-height:33px;font-size:24px;color:#6d6d6d;font-weight:normal;letter-spacing:0.21px;--ls:0.21px;">1,030 KB</div><svg style="left:70px;top:533px" width="30" height="32"><use href="#npp" width="30" height="32"/></svg><div class="t" style="left:109.5px;top:534.1px;height:33px;line-height:33px;font-size:24px;color:#000;font-weight:normal;letter-spacing:1.29px;--ls:1.29px;">dataOpenHcpWH.html</div><div class="t" style="left:559.3px;top:534.1px;height:33px;line-height:33px;font-size:24px;color:#6d6d6d;font-weight:normal;letter-spacing:1.03px;--ls:1.03px;">2020/9/8 13:46</div><div class="t" style="left:799px;top:534.1px;height:33px;line-height:33px;font-size:24px;color:#6d6d6d;font-weight:normal;letter-spacing:0.87px;--ls:0.87px;">HTML <i>文</i><i>件</i></div><div class="t" style="left:1106.7px;top:534.1px;height:33px;line-height:33px;font-size:24px;color:#6d6d6d;font-weight:normal;letter-spacing:0.15px;--ls:0.15px;">29 KB</div><svg style="left:70px;top:575px" width="30" height="32"><use href="#npp" width="30" height="32"/></svg><div class="t" style="left:109.5px;top:576.1px;height:33px;line-height:33px;font-size:24px;color:#000;font-weight:normal;letter-spacing:0.85px;--ls:0.85px;">dataOpenHcpWH-update.html</div><div class="t" style="left:559.3px;top:576.1px;height:33px;line-height:33px;font-size:24px;color:#6d6d6d;font-weight:normal;letter-spacing:1.03px;--ls:1.03px;">2020/9/3 14:29</div><div class="t" style="left:799px;top:576.1px;height:33px;line-height:33px;font-size:24px;color:#6d6d6d;font-weight:normal;letter-spacing:0.87px;--ls:0.87px;">HTML <i>文</i><i>件</i></div><div class="t" style="left:1106.7px;top:576.1px;height:33px;line-height:33px;font-size:24px;color:#6d6d6d;font-weight:normal;letter-spacing:0.15px;--ls:0.15px;">10 KB</div></div>
<div class="r" style="left:1885px;top:905px;width:33px;height:590px;background:#f0f0f0;"></div>
<div class="r" style="left:1885px;top:939px;width:32px;height:94px;background:#cdcdcd;"></div>
<svg style="left:1895px;top:918px" width="13" height="10" viewBox="0 0 13 10"><path d="M1.2 8.5 L6.5 3 L11.8 8.5" fill="none" stroke="#555" stroke-width="2.6"/></svg>
<svg style="left:1895px;top:1473px" width="13" height="10" viewBox="0 0 13 10"><path d="M1.2 1.5 L6.5 7 L11.8 1.5" fill="none" stroke="#555" stroke-width="2.6"/></svg>
<div class="r" style="left:344px;top:1495px;width:1574px;height:167px;background:#f0f0f0;"></div>
<div class="t" style="left:604px;top:1540.5px;height:33px;line-height:33px;font-size:24px;color:#000;font-weight:normal;"><i>文</i><i>件</i><i>名</i>(<u>N</u>):</div>
<div class="r" style="left:730px;top:1537px;width:752px;height:39px;background:#fff;border:1px solid #7a7a7a;"></div>
<div class="t" style="left:736px;top:1541.0px;height:33px;line-height:33px;font-size:24px;color:#000;font-weight:normal;letter-spacing:0.35px;--ls:0.35px;">1F<i>平</i><i>面</i><i>图</i>.jpg</div>
<svg style="left:1458px;top:1552.5px" width="15" height="9" viewBox="0 0 15 9"><path d="M1 1 L7.5 7.5 L14 1" fill="none" stroke="#444" stroke-width="1.6"/></svg>
<div class="r" style="left:1506px;top:1537px;width:376px;height:39px;background:#e1e1e1;border:1px solid #adadad;"></div>
<div class="t" style="left:1510px;top:1541.0px;height:33px;line-height:33px;font-size:24px;color:#000;font-weight:normal;letter-spacing:0.1px;--ls:0.10px;"><i>所</i><i>有</i><i>文</i><i>件</i> (*.*)</div>
<svg style="left:1859px;top:1552.5px" width="15" height="9" viewBox="0 0 15 9"><path d="M1 1 L7.5 7.5 L14 1" fill="none" stroke="#444" stroke-width="1.6"/></svg>
<div class="r" style="left:1507px;top:1588px;width:174px;height:50px;background:#e1e1e1;border:2px solid #0078d7;"></div>
<div class="t" style="left:1551.5px;top:1597.5px;height:33px;line-height:33px;font-size:24px;color:#000;font-weight:normal;"><i>打</i><i>开</i>(<u>O</u>)</div>
<div class="r" style="left:1707px;top:1588px;width:174px;height:50px;background:#e1e1e1;border:1px solid #adadad;"></div>
<div class="t" style="left:1769.5px;top:1597.5px;height:33px;line-height:33px;font-size:24px;color:#000;font-weight:normal;"><i>取</i><i>消</i></div>
<svg style="left:1896.5px;top:1641.5px" width="18" height="18" viewBox="0 0 18 18"><rect x="13" y="1" width="3.4" height="3.4" fill="#bfbfbf"/><rect x="7" y="7" width="3.4" height="3.4" fill="#bfbfbf"/><rect x="13" y="7" width="3.4" height="3.4" fill="#bfbfbf"/><rect x="1" y="13" width="3.4" height="3.4" fill="#bfbfbf"/><rect x="7" y="13" width="3.4" height="3.4" fill="#bfbfbf"/><rect x="13" y="13" width="3.4" height="3.4" fill="#bfbfbf"/></svg>
</body></html>
